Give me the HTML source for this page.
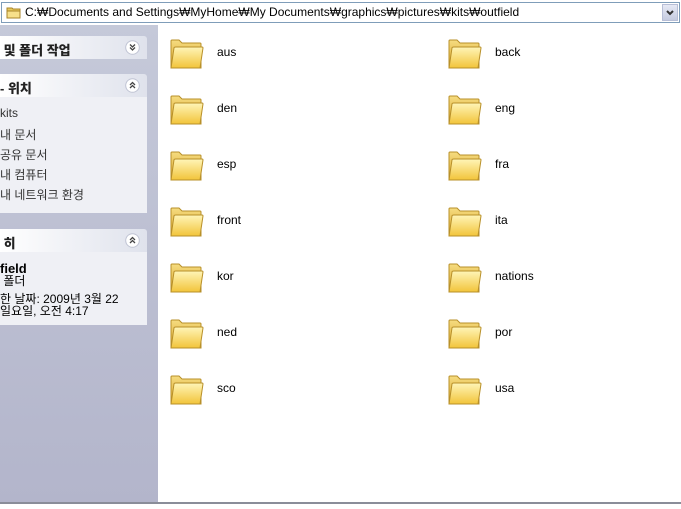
<html><head><style>
body{margin:0;width:681px;height:507px;overflow:hidden;background:#fff;font-family:"Liberation Sans","Noto Sans CJK KR","NanumGothic",sans-serif;font-size:12px;position:relative}
.addr{position:absolute;left:0;top:0;width:681px;height:25px;background:#fff}
.addrbox{position:absolute;left:1px;top:2px;width:677px;height:19px;border:1px solid #7f9db9;background:#fff}
.addrbox span{position:absolute;left:23px;top:2px;font-size:12px;color:#000}
.dd{position:absolute;right:1px;top:1px;width:16px;height:17px;background:linear-gradient(#e6e9f5,#c5cbe0);border:1px solid #b7bed6;box-sizing:border-box}
.side{position:absolute;left:0;top:25px;width:158px;height:477px;background:linear-gradient(#c5c9d9,#b3b5cb)}
.ph{position:absolute;left:0;width:147px;height:23px;background:linear-gradient(90deg,#fff,#dfe2ec);font-weight:bold;font-size:13px;color:#222;border-radius:0 3px 0 0}
.ph b{position:absolute;left:0;top:4px}
.pb{position:absolute;left:0;width:147px;background:#eff0f5}
.btn{position:absolute;right:7px;top:4px;width:15px;height:15px}
.pb div{position:absolute;left:0;font-size:12px;color:#333}
.f{position:absolute;width:36px;height:36px}
.lbl{position:absolute;font-size:12px;color:#000}
.bot{position:absolute;left:0;top:502px;width:681px;height:5px;background:#fff;border-top:2px solid #8a8d99}
</style></head><body>
<div class="addr"><div class="addrbox">
<svg style="position:absolute;left:4px;top:2px" width="16" height="14"><path d="M1 3h5l1 1h7v9H1z" fill="#e8c95a" stroke="#a8852a"/><path d="M1 6h13v7H1z" fill="#f7e08a" stroke="#a8852a"/></svg>
<span>C:₩Documents and Settings₩MyHome₩My Documents₩graphics₩pictures₩kits₩outfield</span>
<div class="dd"><svg width="14" height="15"><path d="M4 6l3 3 3-3" stroke="#333" stroke-width="2" fill="none"/></svg></div></div></div>
<svg width="0" height="0" style="position:absolute"><defs>
<symbol id="dn" viewBox="0 0 15 15"><circle cx="7.5" cy="7.5" r="6.8" fill="#fff" stroke="#c0c4d4"/><path d="M5 4.5l2.5 2.5 2.5-2.5M5 7.5l2.5 2.5 2.5-2.5" stroke="#444" stroke-width="1.3" fill="none"/></symbol>
<symbol id="up" viewBox="0 0 15 15"><circle cx="7.5" cy="7.5" r="6.8" fill="#fff" stroke="#c0c4d4"/><path d="M5 7l2.5-2.5 2.5 2.5M5 10l2.5-2.5 2.5 2.5" stroke="#444" stroke-width="1.3" fill="none"/></symbol>
<linearGradient id="g" x1="0" y1="0" x2="0" y2="1"><stop offset="0" stop-color="#fff5b8"/><stop offset="1" stop-color="#f2c43a"/></linearGradient>
<linearGradient id="g2" x1="0" y1="0" x2="0" y2="1"><stop offset="0" stop-color="#f6dc80"/><stop offset="1" stop-color="#d9a52a"/></linearGradient>
<symbol id="fo" viewBox="0 0 36 36"><path d="M2 5q0-1 1-1h7l3 3h18q1 0 1 1v24H2z" fill="url(#g2)" stroke="#b8902a"/><path d="M2 32l3-20q0-1 2-1h26q1 0 1 1l-3 20z" fill="url(#g)" stroke="#b8902a"/></symbol></defs></svg>
<div class="side">
<div class="ph" style="top:11px"><b>&nbsp;및 폴더 작업</b><svg class="btn"><use href="#dn"/></svg></div>
<div class="ph" style="top:49px"><b>- 위치</b><svg class="btn"><use href="#up"/></svg></div>
<div class="pb" style="top:72px;height:116px">
<div style="top:9px">kits</div><div style="top:29px">내 문서</div><div style="top:49px">공유 문서</div><div style="top:69px">내 컴퓨터</div><div style="top:89px">내 네트워크 환경</div></div>
<div class="ph" style="top:204px"><b>&nbsp;히</b><svg class="btn"><use href="#up"/></svg></div>
<div class="pb" style="top:227px;height:73px">
<div style="top:9px;font-weight:bold;color:#000;font-size:13px">field</div><div style="top:20px;color:#000">&nbsp;폴더</div><div style="top:38px;color:#000">한 날짜: 2009년 3월 22</div><div style="top:50px;color:#000">일요일, 오전 4:17</div></div>
</div>
<svg class="f" style="left:169px;top:36px"><use href="#fo"/></svg><div class="lbl" style="left:217px;top:45px">aus</div>
<svg class="f" style="left:447px;top:36px"><use href="#fo"/></svg><div class="lbl" style="left:495px;top:45px">back</div>
<svg class="f" style="left:169px;top:92px"><use href="#fo"/></svg><div class="lbl" style="left:217px;top:101px">den</div>
<svg class="f" style="left:447px;top:92px"><use href="#fo"/></svg><div class="lbl" style="left:495px;top:101px">eng</div>
<svg class="f" style="left:169px;top:148px"><use href="#fo"/></svg><div class="lbl" style="left:217px;top:157px">esp</div>
<svg class="f" style="left:447px;top:148px"><use href="#fo"/></svg><div class="lbl" style="left:495px;top:157px">fra</div>
<svg class="f" style="left:169px;top:204px"><use href="#fo"/></svg><div class="lbl" style="left:217px;top:213px">front</div>
<svg class="f" style="left:447px;top:204px"><use href="#fo"/></svg><div class="lbl" style="left:495px;top:213px">ita</div>
<svg class="f" style="left:169px;top:260px"><use href="#fo"/></svg><div class="lbl" style="left:217px;top:269px">kor</div>
<svg class="f" style="left:447px;top:260px"><use href="#fo"/></svg><div class="lbl" style="left:495px;top:269px">nations</div>
<svg class="f" style="left:169px;top:316px"><use href="#fo"/></svg><div class="lbl" style="left:217px;top:325px">ned</div>
<svg class="f" style="left:447px;top:316px"><use href="#fo"/></svg><div class="lbl" style="left:495px;top:325px">por</div>
<svg class="f" style="left:169px;top:372px"><use href="#fo"/></svg><div class="lbl" style="left:217px;top:381px">sco</div>
<svg class="f" style="left:447px;top:372px"><use href="#fo"/></svg><div class="lbl" style="left:495px;top:381px">usa</div>
<div class="bot"></div>
</body></html>
